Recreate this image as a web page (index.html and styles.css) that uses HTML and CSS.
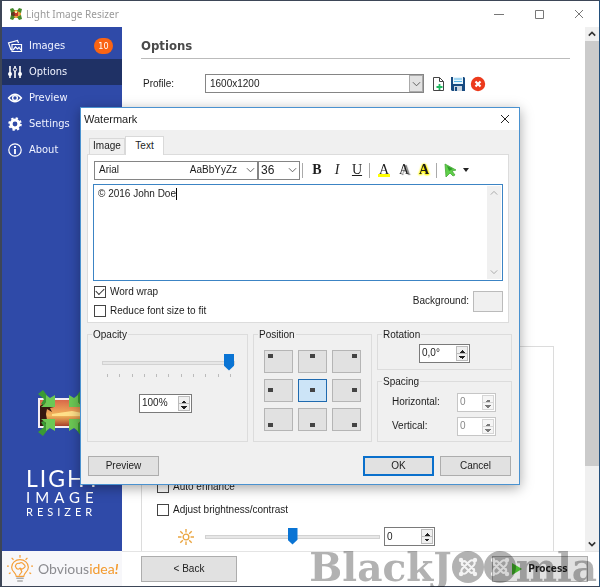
FILE: index.html
```html
<!DOCTYPE html>
<html lang="en">
<head>
<meta charset="utf-8">
<title>Light Image Resizer</title>
<link rel="stylesheet" href="styles.css">
</head>
<body>
<svg class="defs" aria-hidden="true">
  <symbol id="chev" viewBox="0 0 10 6"><path d="M1 1l4 4 4-4" fill="none" stroke="currentColor"/></symbol>
  <symbol id="joom" viewBox="0 0 32 32">
    <circle cx="16" cy="16" r="16" fill="#b2b2b2"/>
    <g fill="none" stroke="#f4f4f4" stroke-width="2" stroke-linecap="round">
      <path d="M10 14c-1-3 2-5 4-3l8 8M18 10c3-2 6 1 4 4l-8 8M22 18c1 3-2 5-4 3l-8-8M14 22c-3 2-6-1-4-4l8-8"/>
    </g>
    <g fill="#f4f4f4"><circle cx="9" cy="9" r="2.200"/><circle cx="23" cy="9" r="2.200"/><circle cx="9" cy="23" r="2.200"/><circle cx="23" cy="23" r="2.200"/></g>
  </symbol>
  <symbol id="arrowin" viewBox="0 0 18 18">
    <path d="M0 4l5-4 6 8-5 7-3-1 3-5z" fill="#3a9a34"/><path d="M8 5l4 3 5-3v12H3l5-4z" fill="#6cc855"/>
  </symbol>
</svg>

<div class="window">
  <header class="titlebar">
    <svg class="appicon" viewBox="0 0 12 12"><path fill="#e9a23c" d="M1 2h10v8H1z"/><path fill="#c3392b" d="M4 4h4v4H4z"/><path fill="#5b3a20" d="M1 4h3l1 3-2 2H1z"/><path fill="#44892c" d="M0 1l3-1 2 3-4 2zM12 1L9 0 7 3l4 2zM0 11l3 1 2-3-4-2zM12 11l-3 1-2-3 4-2z"/><path fill="#f5e6a0" d="M5 3h2v2H5z"/></svg>
    <h1>Light Image Resizer</h1>
    <button class="cap" aria-label="Minimize"><svg viewBox="0 0 10 10"><path d="M0 5.500h10"/></svg></button>
    <button class="cap" aria-label="Maximize"><svg viewBox="0 0 10 10"><path d="M1.500 1.500h8v8h-8z"/></svg></button>
    <button class="cap" aria-label="Close"><svg viewBox="0 0 10 10"><path d="M1 1l8 8M9 1L1 9"/></svg></button>
  </header>

  <nav class="sidebar">
    <a href="#images"><svg viewBox="0 0 16 16"><g fill="none" stroke="#fff" stroke-width="1.200"><path d="M5 6.500h9.500v7H5zM4 12l-2.500-7 9-2.500L11.500 5"/><path d="M6 12l2.500-3 2 2 1.500-1.500 2 2.500"/></g></svg>Images<span class="badge">10</span></a>
    <a href="#options" class="on"><svg viewBox="0 0 16 16"><path d="M3 2v12M8 2v12M13 2v12" stroke="#fff" stroke-width="1.600"/><circle cx="3" cy="10" r="2" fill="#fff"/><circle cx="8" cy="5.500" r="1.600" fill="#1f3165" stroke="#fff"/><circle cx="13" cy="10" r="2" fill="#fff"/></svg>Options</a>
    <a href="#preview"><svg viewBox="0 0 16 16"><path d="M1.500 8q6.500-7.500 13 0-6.500 7.500-13 0z" fill="none" stroke="#fff" stroke-width="1.300"/><circle cx="8" cy="8" r="2.400" fill="none" stroke="#fff" stroke-width="1.400"/></svg>Preview</a>
    <a href="#settings"><svg viewBox="0 0 16 16"><circle cx="8" cy="8" r="3.900" fill="none" stroke="#fff" stroke-width="3"/><circle cx="8" cy="8" r="5.800" fill="none" stroke="#fff" stroke-width="2" stroke-dasharray="2.300 2.255"/></svg>Settings</a>
    <a href="#about"><svg viewBox="0 0 16 16"><circle cx="8" cy="8" r="6.200" fill="none" stroke="#fff" stroke-width="1.200"/><path d="M8 4v2M8 7v5" stroke="#fff" stroke-width="1.800"/></svg>About</a>
    <div class="product">
      <svg class="photo" viewBox="0 0 60 46">
        <defs><linearGradient id="sky" x2="0" y2="1"><stop offset="0" stop-color="#d9684a"/><stop offset=".6" stop-color="#f3b85c"/><stop offset="1" stop-color="#a8402c"/></linearGradient></defs>
        <path d="M0 8h58v30H0z" fill="#f4eef4"/><path d="M2 10h54v26H2z" fill="url(#sky)"/>
        <path d="M2 16l4-3 3 2 4-2 3 4-4 1 2 4-5-3-1 5 2 12H2z" fill="#35180f"/><path d="M14 24l20-3 10 2v3H14z" fill="#ffe08a"/>
        <use href="#arrowin" width="18" height="18"/><use href="#arrowin" width="18" height="18" transform="translate(48 0) scale(-1 1)"/>
        <use href="#arrowin" width="18" height="18" transform="translate(0 46) scale(1 -1)"/><use href="#arrowin" width="18" height="18" transform="translate(48 46) scale(-1 -1)"/>
      </svg>
      <span class="l1">LIGHT</span><span class="l2">IMAGE</span><span class="l3">RESIZER</span>
    </div>
  </nav>

  <main class="content">
    <h2>Options</h2>
    <div class="profile">
      <label for="profile">Profile:</label>
      <span class="combo wide"><select id="profile"><option>1600x1200</option></select><i><svg><use href="#chev"/></svg></i></span>
      <button class="ico" aria-label="New profile"><svg viewBox="0 0 16 16"><path d="M3.500 1.500h6l4 4v9h-10z" fill="#fff" stroke="#444"/><path d="M9.500 1.500v4h4" fill="none" stroke="#444"/><path d="M9.500 8v6M6.500 11h6" stroke="#1fb860" stroke-width="1.800"/></svg></button>
      <button class="ico" aria-label="Save profile"><svg viewBox="0 0 16 16"><path d="M1 1h13l1 1v13H2l-1-1z" fill="#174a80"/><path d="M3 1h10v7H3z" fill="#e8f5fc"/><path d="M4 3h8M4 5.500h8" stroke="#56b5e8"/><path d="M4 10h8v5H4z" fill="#c9d4df"/><path d="M5 11h2v4H5z" fill="#174a80"/></svg></button>
      <button class="ico" aria-label="Delete profile"><svg viewBox="0 0 16 16"><circle cx="8" cy="8" r="7.200" fill="#ec3a1c"/><path d="M5.500 5.500l5 5M10.500 5.500l-5 5" stroke="#fff" stroke-width="2.200"/></svg></button>
    </div>
    <section class="panel">
      <label class="check"><input type="checkbox">Auto enhance</label>
      <label class="check"><input type="checkbox">Adjust brightness/contrast</label>
      <div class="bright">
        <svg viewBox="0 0 14 14"><g fill="none" stroke="#eaa540" stroke-width="1.200"><circle cx="7" cy="7" r="2.500"/><path d="M7 0v3M7 11v3M0 7h3M11 7h3M2 2l2.200 2.200M9.800 9.800L12 12M12 2L9.800 4.200M4.200 9.800L2 12"/></g></svg>
        <input type="range" aria-label="Brightness" min="0" max="100" value="50">
        <span class="spin"><input type="text" aria-label="Brightness value" value="0"><b></b></span>
      </div>
    </section>
  </main>
  <div class="scroll" aria-hidden="true"><svg class="up"><use href="#chev"/></svg><i></i><svg><use href="#chev"/></svg></div>

  <div class="brand">
    <svg viewBox="0 0 28 30"><g fill="none" stroke="#f5a03a" stroke-width="1.300"><path d="M10 23c0-4-5-5-5-10a9 8 0 0 1 18 0c0 5-5 6-5 10z"/><path d="M9 12q1-4 4-3 3-2 5 1 3 2 0 4-2 2-4 0-3 3-5-2zM14 14l2 4-3 4M5 3l2 2M22 3l-2 2M0 12h2M26 12h2M2 20l2-1M26 20l-2-1M14 0v3"/></g><path d="M10 25h8M11 28h6" stroke="#aaa" stroke-width="1.600"/></svg>
    <span>Obvious<em>idea<strong>!</strong></em></span>
  </div>
  <footer class="actions">
    <button class="btn">&lt; Back</button>
    <button class="btn process"><svg viewBox="0 0 10 12"><path d="M0 0l10 6-10 6z" fill="#46b82e"/></svg>Process</button>
    <div class="stamp"><span>BlackJ</span><svg><use href="#joom"/></svg><svg><use href="#joom"/></svg><span>mla</span></div>
  </footer>
</div>

<div class="overlay">
<section class="dialog" role="dialog" aria-labelledby="dt">
  <header><h2 id="dt">Watermark</h2><button class="cap dark" aria-label="Close dialog"><svg viewBox="0 0 10 10"><path d="M1 1l8 8M9 1L1 9"/></svg></button></header>
  <div class="tabs"><button>Image</button><button class="sel">Text</button></div>
  <div class="page">
    <div class="tools">
      <span class="combo font"><select aria-label="Font"><option>Arial</option></select><span>AaBbYyZz</span><i><svg><use href="#chev"/></svg></i></span>
      <span class="combo size"><select aria-label="Font size"><option>36</option></select><i><svg><use href="#chev"/></svg></i></span>
      <hr>
      <button class="t"><b>B</b></button><button class="t"><i>I</i></button><button class="t"><u>U</u></button>
      <hr>
      <button class="t"><span class="hl">A</span></button><button class="t"><span class="sh">A</span></button><button class="t"><span class="gl">A</span></button>
      <hr>
      <button class="t effect" aria-label="Effects"><svg viewBox="0 0 28 14"><path d="M2 1l11 6-4 1 3 4-2 1-3-3-4 4z" fill="#5fd04a" stroke="#49a838" stroke-width=".8"/><path d="M4 3l6 3-4 2z" fill="#2f9a2a"/><path d="M20 5h6l-3 4z" fill="#222"/></svg></button>
    </div>
    <div class="edit"><textarea aria-label="Watermark text">© 2016 John Doe</textarea><s class="caret"></s><div aria-hidden="true"><svg class="up"><use href="#chev"/></svg><svg><use href="#chev"/></svg></div></div>
    <div class="under">
      <div><label class="check"><input type="checkbox" checked>Word wrap</label><label class="check"><input type="checkbox">Reduce font size to fit</label></div>
      <label class="bg" for="bg">Background:</label><button id="bg" class="swatch"></button>
    </div>
  </div>
  <div class="groups">
    <fieldset class="opacity"><legend>Opacity</legend>
      <input type="range" aria-label="Opacity" value="100">
      <div class="ticks"><i></i><i></i><i></i><i></i><i></i><i></i><i></i><i></i><i></i><i></i><i></i></div>
      <span class="spin"><input type="text" aria-label="Opacity value" value="100%"><b></b></span>
    </fieldset>
    <fieldset class="position"><legend>Position</legend>
      <div class="nine">
        <button aria-label="Top left" class="l tp"></button><button aria-label="Top" class="tp"></button><button aria-label="Top right" class="r tp"></button>
        <button aria-label="Left" class="l"></button><button aria-label="Center" class="on"></button><button aria-label="Right" class="r"></button>
        <button aria-label="Bottom left" class="l bt"></button><button aria-label="Bottom" class="bt"></button><button aria-label="Bottom right" class="r bt"></button>
      </div>
    </fieldset>
    <div class="stack">
      <fieldset class="rotation"><legend>Rotation</legend><span class="spin"><input type="text" aria-label="Rotation" value="0,0°"><b></b></span></fieldset>
      <fieldset class="spacing"><legend>Spacing</legend>
        <div><label for="h">Horizontal:</label><span class="spin off"><input type="text" id="h" value="0" disabled><b></b></span></div>
        <div><label for="v">Vertical:</label><span class="spin off"><input type="text" id="v" value="0" disabled><b></b></span></div>
      </fieldset>
    </div>
  </div>
  <div class="buttons"><button class="btn">Preview</button><button class="btn ok">OK</button><button class="btn">Cancel</button></div>
</section>
</div>
</body>
</html>
```
FILE: styles.css
```css
* { box-sizing: border-box; }
body { margin: 0; font: 10px/12px "Liberation Sans", sans-serif; color: #1c1c1c; }
button, input, select, textarea { font: inherit; color: inherit; margin: 0; padding: 0; border: 0; background: none; }
h1, h2 { margin: 0; font-weight: 400; }
.defs { display: none; }

.window {
  min-height: 100vh; display: grid; background: #fff;
  grid-template: 26px 1fr 35px / 120px 1fr 14px;
  border: solid #3d4657; border-width: 1px 1px 1px 2px; border-right-color: #23507c;
}
.titlebar { grid-column: 1 / -1; display: flex; align-items: center; padding-left: 8px; }
.titlebar h1 { font: 10px/14px "Noto Sans", sans-serif; color: #999; margin-left: 4px; flex: 1; }
.appicon { width: 12px; height: 12px; }
.cap { width: 40px; height: 24px; display: grid; place-items: center; }
.cap svg { width: 10px; height: 10px; fill: none; stroke: #777; }
.cap.dark { width: 28px; }
.cap.dark svg { stroke: #222; }

.sidebar { background: #2f4aa8; padding-top: 6px; display: flex; flex-direction: column; }
.sidebar a { display: flex; align-items: center; height: 26px; padding: 0 9px 0 5px; color: #f0f3ff; text-decoration: none; font: 11px/14px "DejaVu Sans Condensed", "DejaVu Sans", sans-serif; }
.sidebar a svg { width: 16px; height: 16px; margin-right: 6px; }
.sidebar a.on { background: #1f3165; }
.badge { margin-left: auto; width: 19px; height: 16px; border-radius: 8px; background: #fa6414; color: #fff; font-size: 9px; line-height: 16px; text-align: center; }
.product { margin-top: auto; padding: 0 0 33px 24px; display: flex; flex-direction: column; color: #fff; font-family: Lato, sans-serif; overflow: hidden; }
.photo { width: 60px; height: 46px; margin: 0 0 30px 12px; }
.l1 { font-size: 23px; line-height: 24px; letter-spacing: 2px; }
.l2 { font-size: 15px; line-height: 15px; letter-spacing: 5px; }
.l3 { font-size: 11px; line-height: 13px; letter-spacing: 4px; }

.content { padding: 10px 31px 0 19px; display: flex; flex-direction: column; }
.content > h2 { font: bold 13px/17px "DejaVu Sans Condensed", "DejaVu Sans", sans-serif; color: #4a4a4a; padding-bottom: 4px; margin-right: -16px; border-bottom: 1px solid #bbb; }
.profile { display: flex; align-items: center; margin: 15px -16px 0 2px; }
.profile label { width: 62px; }
.combo { display: grid; grid-template-columns: 1fr auto; height: 19px; border: 1px solid #858585; background: #fff; }
.combo select { grid-area: 1 / 1 / 2 / 3; appearance: none; padding-left: 4px; outline: 0; }
.combo > span { grid-area: 1 / 1; justify-self: end; align-self: center; margin-right: 6px; }
.combo i { grid-area: 1 / 2; width: 14px; display: grid; place-items: center; pointer-events: none; color: #555; }
.combo svg { width: 9px; height: 6px; }
.combo.wide { width: 219px; margin-right: 4px; }
.combo.wide i { background: #e2e2e2; border: 1px solid #aaa; }
.ico { width: 16px; height: 16px; margin-left: 2px; margin-right: 2px; }
.ico svg { display: block; width: 16px; height: 16px; }
.panel { margin-top: auto; height: 205px; padding: 134px 0 0 15px; border: solid #dcdcdc; border-width: 1px 1px 0; }
.check { display: flex; align-items: center; gap: 4px; height: 12px; }
.check input { appearance: none; width: 12px; height: 12px; border: 1px solid #444; background: #fff; display: grid; place-items: center; }
.check input:checked::after { content: ""; width: 7px; height: 4px; border: solid #333; border-width: 0 0 1px 1px; transform: translateY(-1px) rotate(-45deg); }
.panel .check { margin-bottom: 11px; }
.bright { display: flex; align-items: center; padding-left: 21px; }
.bright > svg { width: 16px; height: 16px; margin-right: 11px; }
.bright input[type=range] { width: 175px; margin-right: 4px; }
input[type=range] { appearance: none; height: 18px; }
input[type=range]::-webkit-slider-runnable-track { height: 4px; background: #e7e7e7; border: 1px solid #d2d2d2; }
input[type=range]::-webkit-slider-thumb { appearance: none; width: 10px; height: 17px; margin-top: -8px; background: #0a74d4; clip-path: polygon(0 0, 100% 0, 100% 72%, 50% 100%, 0 72%); }

.spin { display: flex; width: 51px; height: 19px; border: 1px solid #7a7a7a; background: #fff; padding: 1px; }
.spin input { flex: 1; min-width: 0; padding-left: 1px; }
.spin b {
  width: 12px; border: 1px solid #bbb;
  background:
    conic-gradient(from 135deg at 50% 0, #222 90deg, transparent 0) center 3px / 6px 3px no-repeat,
    conic-gradient(from -45deg at 50% 100%, #222 90deg, transparent 0) center 9px / 6px 3px no-repeat,
    linear-gradient(#bbb, #bbb) center / 100% 1px no-repeat, #f0f0f0;
}
.spin.off { width: 39px; color: #888; border-color: #c6c6c6; }
.spin.off b { opacity: .6; }

.scroll { background: #f0f0f0; display: flex; flex-direction: column; align-items: center; color: #333; }
.scroll svg { width: 8px; height: 14px; padding: 4px 0; stroke-width: 2; }
.up { transform: scaleY(-1); }
.scroll i { width: 100%; flex: 1; background: #cbcbcb; margin-bottom: 71px; }

.brand { background: #f7f7fa; display: flex; align-items: center; padding-left: 5px; font: 14px/16px Lato, sans-serif; color: #8c8c90; }
.brand svg { width: 26px; height: 30px; margin-right: 5px; }
.brand em { font-style: normal; color: #f39a2e; }
.brand strong { font-style: italic; }
.actions { grid-column: 2 / -1; position: relative; display: flex; justify-content: space-between; align-items: center; padding: 0 11px 0 19px; border-top: 1px solid #e4e4e4; }
.btn { height: 20px; width: 71px; background: #e1e1e1; border: 1px solid #adadad; }
.actions .btn { width: 96px; height: 26px; }
.process { display: flex; align-items: center; justify-content: center; gap: 6px; font: bold 10px/12px "DejaVu Sans Condensed", "DejaVu Sans", sans-serif; }
.process svg { width: 10px; height: 12px; }
.stamp { position: absolute; right: 2px; top: -1px; display: flex; align-items: center; height: 32px; color: #b2b2b2; font: bold 39px/30px "DejaVu Serif", serif; mix-blend-mode: multiply; pointer-events: none; }
.stamp svg { width: 32px; height: 32px; flex: none; }

.overlay { position: fixed; inset: 0; display: grid; place-items: center; padding-top: 4px; }
.dialog { width: 440px; background: #f0f0f0; border: 1px solid #4a92d0; box-shadow: 0 3px 12px rgba(0, 0, 0, .35); padding: 0 7px 8px 6px; }
.dialog > header { display: flex; justify-content: space-between; align-items: center; height: 22px; margin: 0 -7px 6px -6px; padding-left: 3px; background: #fff; }
.dialog h2 { font-size: 11px; line-height: 14px; }
.tabs { display: flex; align-items: flex-end; height: 18px; padding-left: 2px; }
.tabs button { width: 36px; height: 16px; border: 1px solid #d9d9d9; border-bottom: 0; }
.tabs .sel { width: 39px; height: 19px; margin-bottom: -1px; background: #fff; z-index: 1; }
.page { background: #fff; border: 1px solid #dcdcdc; padding: 6px 5px 5px 6px; height: 169px; margin-right: 3px; }
.tools { display: flex; align-items: center; height: 19px; }
.font { width: 164px; }
.size { width: 42px; }
.size select { padding-left: 2px; font-size: 12px; }
.tools hr { width: 1px; height: 15px; margin: 0 4px 0 2px; border: 0; background: #aaa; }
.t { width: 20px; height: 18px; font: 14px/16px "Liberation Serif", serif; }
.t span { display: block; width: 12px; height: 16px; margin: 0 auto; }
.hl { background: linear-gradient(#ff0, #ff0) 0 12px / 12px 3px no-repeat; }
.sh { text-shadow: 2px 1px 1px #777; }
.gl { font-weight: 700; text-shadow: 0 0 2px #fd0, 0 0 2px #ff0, 1px 1px 2px #ff0, -1px 1px 2px #ff0; }
.effect { width: 28px; margin-left: 2px; }
.effect svg { width: 28px; height: 14px; display: block; }
.edit { position: relative; display: flex; height: 97px; margin: 4px 0 5px -1px; border: 1px solid #3c84c4; }
.edit textarea { flex: 1; resize: none; outline: 0; padding: 3px 4px; overflow: hidden; }
.edit div { width: 14px; margin: 1px; background: #f0f0f0; color: #999; display: flex; flex-direction: column; justify-content: space-between; align-items: center; padding: 4px 0; }
.edit svg { width: 8px; height: 6px; }
.caret { position: absolute; left: 82px; top: 3px; width: 1px; height: 12px; background: #000; }
.under { display: flex; align-items: center; }
.under > div { flex: 1; display: grid; gap: 7px; }
.swatch { width: 30px; height: 21px; border: 1px solid #bbb; background: #f0f0f0; margin-left: 4px; }
.groups { display: flex; gap: 5px; margin-top: 6px; }
fieldset { margin: 0; padding: 0; border: 1px solid #dcdcdc; min-width: 0; }
legend { margin-left: 4px; padding: 0 1px; line-height: 12px; }
.opacity { width: 161px; }
.opacity input[type=range] { display: block; width: 133px; margin: 13px 0 0 14px; }
.ticks { display: flex; justify-content: space-between; width: 124px; margin: 2px 0 17px 19px; }
.ticks i { width: 1px; height: 3px; background: #bbb; }
.opacity .spin { width: 53px; margin-left: 51px; }
.position { width: 119px; }
.nine { display: grid; grid-template-columns: repeat(3, 29px); grid-auto-rows: 23px; gap: 6px 5px; margin: 9px 0 0 10px; }
.nine button { display: flex; justify-content: center; align-items: center; padding: 3px; background: #e1e1e1; border: 1px solid #b5b5b5; }
.nine button::after { content: ""; width: 5px; height: 4px; background: #444; }
.nine .l { justify-content: flex-start; }
.nine .r { justify-content: flex-end; }
.nine .tp { align-items: flex-start; }
.nine .bt { align-items: flex-end; }
.nine .on { background: #cce4f7; border-color: #1f6aaf; }
.stack { flex: 1; display: flex; flex-direction: column; gap: 6px; height: 113px; }
.rotation { height: 41px; }
.rotation .spin { margin: 3px 0 0 41px; }
.spacing { flex: 1; }
.spacing div { display: flex; justify-content: space-between; align-items: center; margin: 5px 15px 0 14px; }
.buttons { display: flex; gap: 6px; margin: 14px 0 0 1px; padding-right: 1px; }
.buttons .ok { margin-left: auto; border: 2px solid #0a70cc; }
```
